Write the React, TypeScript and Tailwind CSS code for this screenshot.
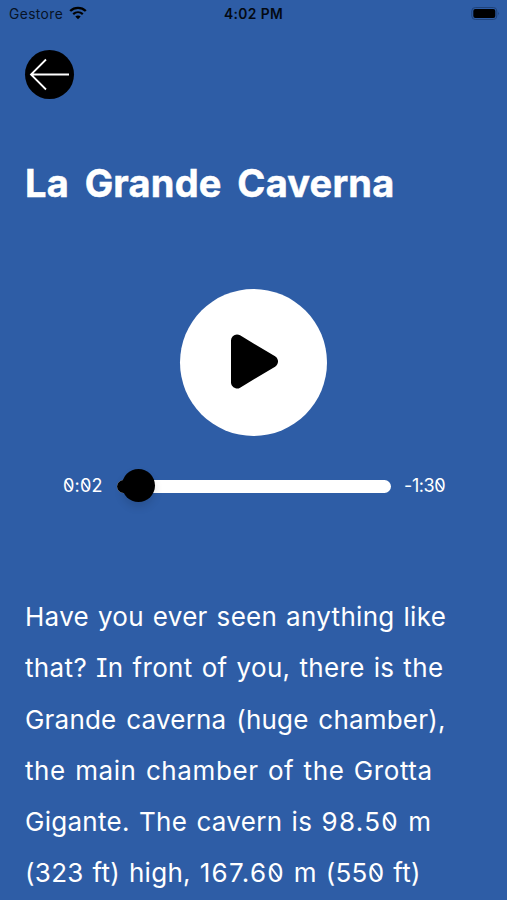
import React from 'react';

interface LineProps {
  text: string;
  className: string;
}

// zero with a backward slash through the counter
const Zero = () => (
  <span className="relative inline-block">
    0
    <svg className="absolute left-0 top-1/2 -translate-y-1/2 w-[0.62em] h-[0.73em]" viewBox="0 0 16 19" preserveAspectRatio="none">
      <path d="M3.2 3L12.8 16" stroke="currentColor" strokeWidth="2" />
    </svg>
  </span>
);

const slashZeros = (text: string) =>
  text.split(/(0)/).map((part, i) => (part === '0' ? <Zero key={i} /> : part));

// decimals are set a little wider than the words around them
const Line = ({ text, className }: LineProps) => (
  <span className={`block whitespace-nowrap [font-feature-settings:'cv08'] ${className}`}>
    {text.split(/(\d+\.\d+)/).map((part, i) => (
      <span key={i} className={i % 2 ? 'tracking-[1.3px]' : ''}>{slashZeros(part)}</span>
    ))}
  </span>
);

const StatusBar = () => (
  <header className="grid grid-cols-3 items-center h-7 pl-[9px] pr-[7px] text-[13.8px] text-[#071326]">
    <div className="flex items-center gap-[6px]">
      <span className="tracking-[0.4px]">Gestore</span>
      <svg className="w-[18px] h-[14px] -mt-[2px]" viewBox="0 0 18 14" fill="none">
        <path d="M1.2 5C5.6 .8 12.4 .8 16.8 5" stroke="black" strokeWidth="2.4" />
        <path d="M4.2 8.1C7 5.6 11 5.6 13.8 8.1" stroke="black" strokeWidth="2.2" />
        <path d="M9 13.3L6.3 10.6C7.8 9.2 10.2 9.2 11.7 10.6Z" fill="black" />
      </svg>
    </div>
    <span className="-ml-[2px] text-center font-semibold tracking-[0.4px] text-[#030912]">4:02 PM</span>
    <svg className="justify-self-end w-[29px] h-[13px] -mt-[2px]" viewBox="0 0 29 13">
      <rect x=".8" y=".5" width="25" height="12" rx="3.5" fill="none" stroke="#1f427a" />
      <rect x="2.3" y="2" width="22" height="9" rx="2" fill="black" />
      <path d="M27.2 4.8Q29 6.5 27.2 8.2Z" fill="#1f427a" />
    </svg>
  </header>
);

const Player = () => (
  <section className="flex flex-col items-center">
    <button className="flex items-center justify-center w-[147px] h-[147px] rounded-full bg-white" title="Play">
      <svg className="w-[147px] h-[147px]" viewBox="0 0 147 147">
        <path d="M57 51.5L92 72.5L57 93.5Z" fill="black" stroke="black" strokeWidth="12" strokeLinejoin="round" />
      </svg>
    </button>
    <div className="flex items-center w-full h-[34px] mt-[33px] pl-[63px] text-[18px]">
      <span className="w-[54px] pb-[2px]"><Line text="0:02" className="tracking-[0.2px]" /></span>
      <div className="relative w-[274px] h-[13px] mt-px rounded-full bg-white">
        <div className="w-[20px] h-[13px] rounded-full bg-black" />
        <div className="absolute left-[5px] -top-[11px] w-[33px] h-[33px] rounded-full bg-black shadow-[0_5px_8px_rgba(0,0,0,0.12)]" />
      </div>
      <span className="ml-[13px] pb-[2px]"><Line text="-1:30" className="tracking-[-0.4px]" /></span>
    </div>
  </section>
);

const App = () => {
  return (
    <main className="w-full h-screen overflow-hidden bg-[#2e5da6] text-white font-['Inter',sans-serif]">
      <StatusBar />
      <button className="flex items-center justify-center mt-[22px] ml-[25px] w-[49px] h-[49px] rounded-full bg-black" title="Back">
        <svg className="w-[49px] h-[49px]" viewBox="0 0 49 49" fill="none" stroke="white" strokeWidth="1.8">
          <path d="M44 24.5H6M21 9.5L6 24.5L21 39.5" />
        </svg>
      </button>
      <h1 className="mt-[56px] ml-[25px] h-[57px] leading-[56px] text-[38px] font-bold whitespace-nowrap tracking-[0.2px] [word-spacing:6.5px] [-webkit-text-stroke:0.5px_white]">
        La Grande Caverna
      </h1>
      <div className="mt-[77px]">
        <Player />
      </div>
      <p className="mt-[88px] ml-[25px] text-[26px] leading-[51.3px]">
        <Line text="Have you ever seen anything like" className="tracking-[0.3px] [word-spacing:1.3px]" />
        <Line text="that? In front of you, there is the" className="tracking-[0.35px] [word-spacing:1.3px]" />
        <Line text="Grande caverna (huge chamber)," className="tracking-[0.2px] [word-spacing:2.3px]" />
        <Line text="the main chamber of the Grotta" className="tracking-[0.6px] [word-spacing:1.4px]" />
        <Line text="Gigante. The cavern is 98.50 m" className="tracking-[0.28px] [word-spacing:1.7px]" />
        <Line text="(323 ft) high, 167.60 m (550 ft)" className="tracking-[0.3px] [word-spacing:1.2px]" />
      </p>
    </main>
  );
};

export default App;
